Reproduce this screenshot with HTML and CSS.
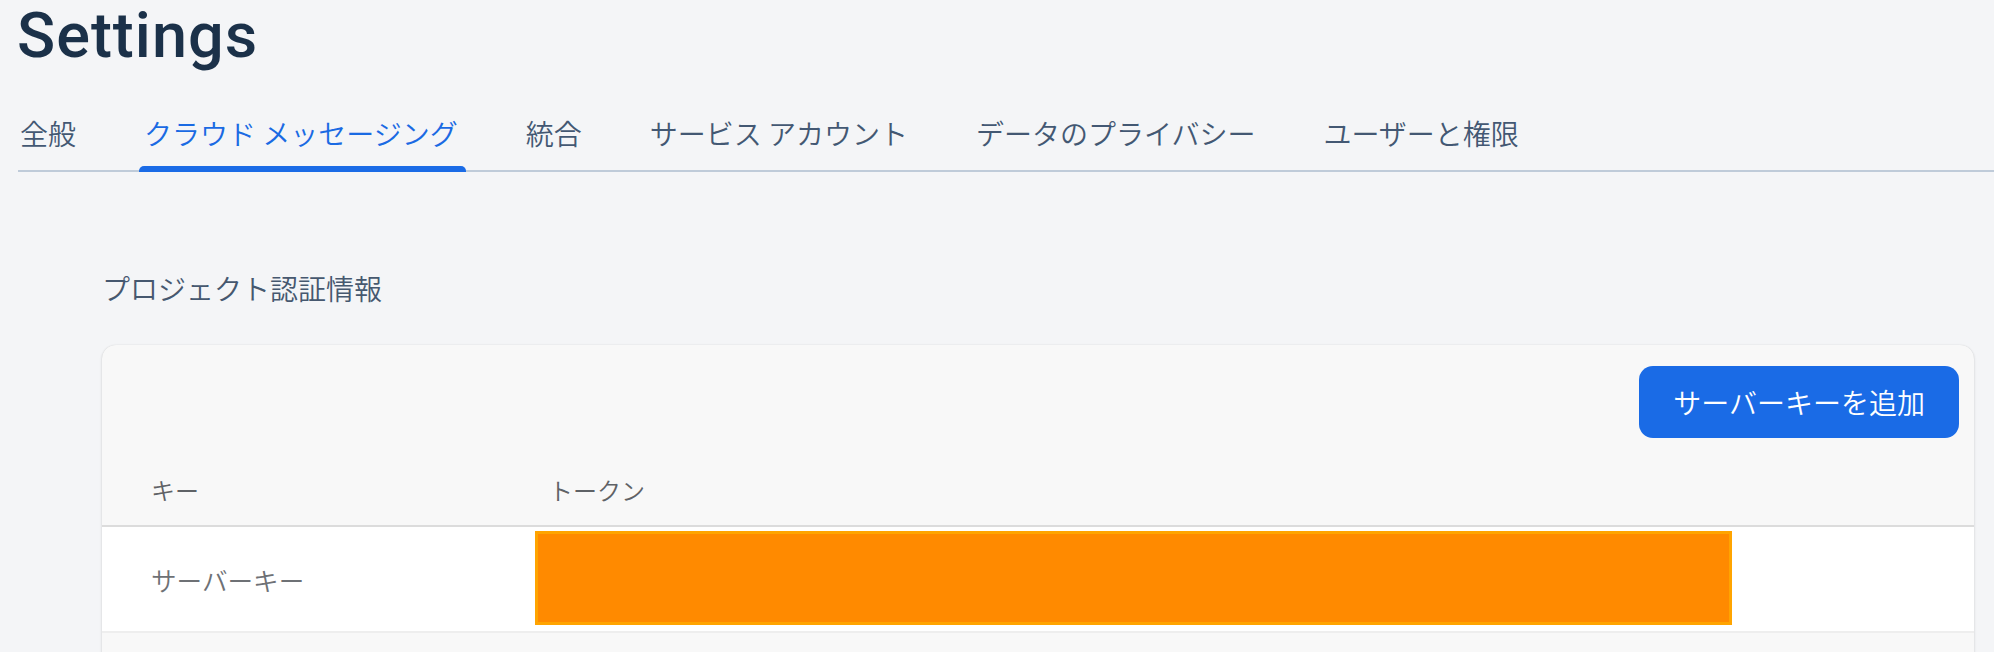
FILE: index.html
```html
<!DOCTYPE html>
<html lang="ja">
<head>
<meta charset="utf-8">
<title>Settings</title>
<link rel="stylesheet" href="styles.css">
</head>
<body>
<header class="page-head">
  <h1 class="title">Settings</h1>
  <nav class="tabs">
    <a class="tab">全般</a>
    <a class="tab active">クラウド メッセージング</a>
    <a class="tab">統合</a>
    <a class="tab">サービス アカウント</a>
    <a class="tab">データのプライバシー</a>
    <a class="tab">ユーザーと権限</a>
  </nav>
</header>
<main class="content">
  <h2 class="section-title">プロジェクト認証情報</h2>
  <section class="card">
    <div class="card-toolbar">
      <button class="btn-primary" type="button">サーバーキーを追加</button>
    </div>
    <table class="keys">
      <thead>
        <tr>
          <th class="col-key">キー</th>
          <th class="col-token">トークン</th>
          <th class="col-rest"></th>
        </tr>
      </thead>
      <tbody>
        <tr>
          <td class="cell-key">サーバーキー</td>
          <td class="cell-token"><div class="redact"></div></td>
          <td class="cell-rest"></td>
        </tr>
      </tbody>
    </table>
    <div class="card-foot"></div>
  </section>
</main>
</body>
</html>
```

FILE: styles.css
```css
* { box-sizing: border-box; }

html, body {
  margin: 0;
  padding: 0;
  background: #f4f5f7;
  font-family: "Noto Sans CJK JP", "Noto Sans", sans-serif;
  overflow: hidden;
}

.page-head {
  display: flex;
  flex-direction: column;
}

.title {
  margin: 0;
  padding-left: 17px;
  font-family: Roboto, "Noto Sans", sans-serif;
  font-size: 63px;
  font-weight: 500;
  line-height: 72px;
  color: #1b3149;
  letter-spacing: 1px;
}

.tabs {
  display: flex;
  gap: 68px;
  margin-left: 18px;
  padding-left: 2px;
  border-bottom: 2px solid #bfcbd9;
}

.tab {
  position: relative;
  padding: 41px 0 17px;
  font-size: 28px;
  font-weight: 350;
  line-height: 40px;
  color: #435873;
  white-space: nowrap;
  cursor: pointer;
}

.tab.active {
  color: #1a6ae3;
}

.tab.active::after {
  content: "";
  position: absolute;
  left: -5px;
  right: -8px;
  bottom: -2px;
  height: 6px;
  background: #1a6be6;
  border-radius: 5px 5px 0 0;
}

.content {
  padding: 0 20px 0 102px;
}

.section-title {
  margin: 96px 0 37px;
  font-size: 28px;
  font-weight: 350;
  line-height: 40px;
  color: #46586f;
}

.card {
  background: #f8f8f8;
  border-radius: 14px 14px 0 0;
  box-shadow: 0 1px 3px rgba(0, 0, 0, 0.14), 0 0 1px rgba(0, 0, 0, 0.12);
  overflow: hidden;
}

.card-toolbar {
  display: flex;
  justify-content: flex-end;
  padding: 21px 15px 16px;
}

.btn-primary {
  height: 72px;
  padding: 0 34px;
  border: 0;
  border-radius: 14px;
  background: #1a6be6;
  color: #ffffff;
  font-family: "Noto Sans CJK JP", "Noto Sans", sans-serif;
  font-size: 28px;
  font-weight: 350;
  line-height: 40px;
}

.keys {
  width: 100%;
  border-collapse: collapse;
}

.keys th {
  height: 72px;
  padding: 0;
  text-align: left;
  font-size: 24px;
  font-weight: 350;
  color: #5f6266;
  vertical-align: middle;
  border-bottom: 2px solid #dcdcdc;
}

.keys th.col-key,
.keys td.cell-key {
  width: 433px;
  padding-left: 49px;
}

.keys th.col-token {
  width: 1197px;
  padding-left: 14px;
}

.keys tbody tr {
  background: #ffffff;
}

.keys td {
  padding: 0;
  vertical-align: middle;
  border-bottom: 2px solid #eeeeee;
}

.keys td.cell-key {
  font-size: 25.6px;
  font-weight: 350;
  color: #6e7175;
}

.keys td.cell-token {
  padding: 4px 0 6px;
}

.redact {
  width: 1197px;
  height: 94px;
  background: #ff8a00;
  border: 3px solid #ffa400;
}

.card-foot {
  height: 60px;
}
```
